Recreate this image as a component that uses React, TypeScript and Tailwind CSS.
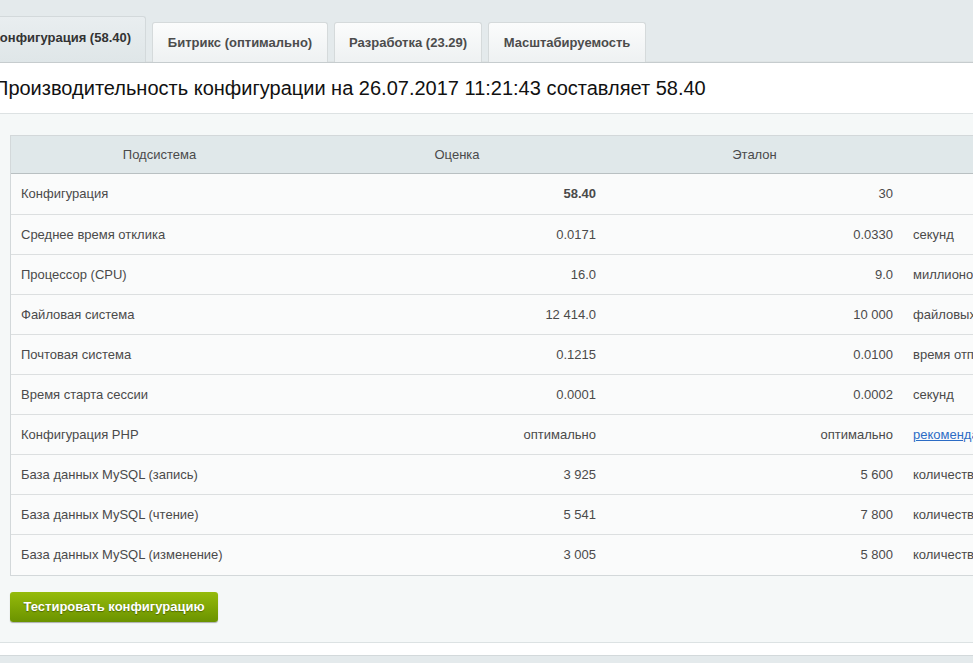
import React from "react";

const rows: { name: string; score: string; ref: string; unit?: string; bold?: boolean; link?: boolean }[] = [
  { name: "Конфигурация", score: "58.40", ref: "30", bold: true },
  { name: "Среднее время отклика", score: "0.0171", ref: "0.0330", unit: "секунд" },
  { name: "Процессор (CPU)", score: "16.0", ref: "9.0", unit: "миллионов операций" },
  { name: "Файловая система", score: "12 414.0", ref: "10 000", unit: "файловых операций" },
  { name: "Почтовая система", score: "0.1215", ref: "0.0100", unit: "время отправки" },
  { name: "Время старта сессии", score: "0.0001", ref: "0.0002", unit: "секунд" },
  { name: "Конфигурация PHP", score: "оптимально", ref: "оптимально", unit: "рекомендации", link: true },
  { name: "База данных MySQL (запись)", score: "3 925", ref: "5 600", unit: "количество операций" },
  { name: "База данных MySQL (чтение)", score: "5 541", ref: "7 800", unit: "количество операций" },
  { name: "База данных MySQL (изменение)", score: "3 005", ref: "5 800", unit: "количество операций" },
];

const tabs = ["Битрикс (оптимально)", "Разработка (23.29)", "Масштабируемость"];

export default function App() {
  return (
    <div className="h-[663px] w-[973px] overflow-hidden bg-[#e4eaec] font-['Liberation_Sans',Arial,sans-serif]">
      <div className="flex h-[62px] items-end gap-[6px] ml-[-23px]">
        <div className="flex h-[46px] w-[169px] items-center justify-center rounded-t-[3px] border border-b-0 border-[#d3d9db] bg-gradient-to-b from-[#e9eef0] to-[#dfe6e8] pb-[4px] text-[13px] font-bold text-[#333]">
          Конфигурация (58.40)
        </div>
        {tabs.map((t, i) => (
          <div
            key={t}
            className={`flex h-[40px] items-center justify-center rounded-t-[3px] border border-b-0 border-[#d5dadb] bg-gradient-to-b from-[#fbfcfc] to-[#eef1f2] text-[13px] font-bold text-[#4c4c4c] ${
              i === 0 ? "w-[176px]" : i === 1 ? "w-[148px]" : "w-[158px]"
            }`}
          >
            {t}
          </div>
        ))}
      </div>
      <div className="border-t border-[#c6ccce] bg-white shadow-[0_-1px_0_#dfe4e5]">
        <div className="flex h-[51px] items-center whitespace-nowrap border-b border-[#dde2e3] ml-[-6px] text-[20px] text-[#111]">
          Производительность конфигурации на 26.07.2017 11:21:43 составляет 58.40
        </div>
        <div className="bg-[#f5f8f8] pb-[20px] pl-[10px] pt-[21px]">
          <div className="w-[1140px] border border-[#d3d8da] bg-[#fafbfb] text-[13px] text-[#4a4a4a]">
            <div className="flex h-[38px] items-center border-b border-[#b9c0c2] bg-[#e0e8ea] text-[#4a4a4a]">
              <div className="w-[297px] text-center">Подсистема</div>
              <div className="w-[298px] text-center">Оценка</div>
              <div className="w-[297px] text-center">Эталон</div>
              <div className="flex-1" />
            </div>
            {rows.map((r, i) => (
              <div
                key={r.name}
                className={`flex items-center ${i === 0 ? "h-[41px]" : "h-[40px]"} ${
                  i < rows.length - 1 ? "border-b border-[#dcdfe0]" : ""
                }`}
              >
                <div className="w-[297px] pl-[10px]">{r.name}</div>
                <div className={`w-[298px] pr-[10px] text-right ${r.bold ? "font-bold" : ""}`}>{r.score}</div>
                <div className="w-[297px] pr-[10px] text-right">{r.ref}</div>
                <div className="flex-1 whitespace-nowrap pl-[10px]">
                  {r.link ? <span className="text-[#2c6cc5] underline">{r.unit}</span> : r.unit}
                </div>
              </div>
            ))}
          </div>
          <div className="mt-[16px] flex h-[30px] w-[208px] items-center justify-center rounded-[3px] bg-gradient-to-b from-[#95bb0c] to-[#6b9300] text-[13px] font-bold text-white shadow-[0_1px_1px_rgba(0,0,0,0.3)] [text-shadow:0_1px_1px_rgba(0,0,0,0.35)]">
            Тестировать конфигурацию
          </div>
        </div>
        <div className="h-[13px] border-t border-[#dce2e3] bg-white" />
      </div>
      <div className="border-t border-[#d3d9db] bg-[#e4eaec]" />
    </div>
  );
}
